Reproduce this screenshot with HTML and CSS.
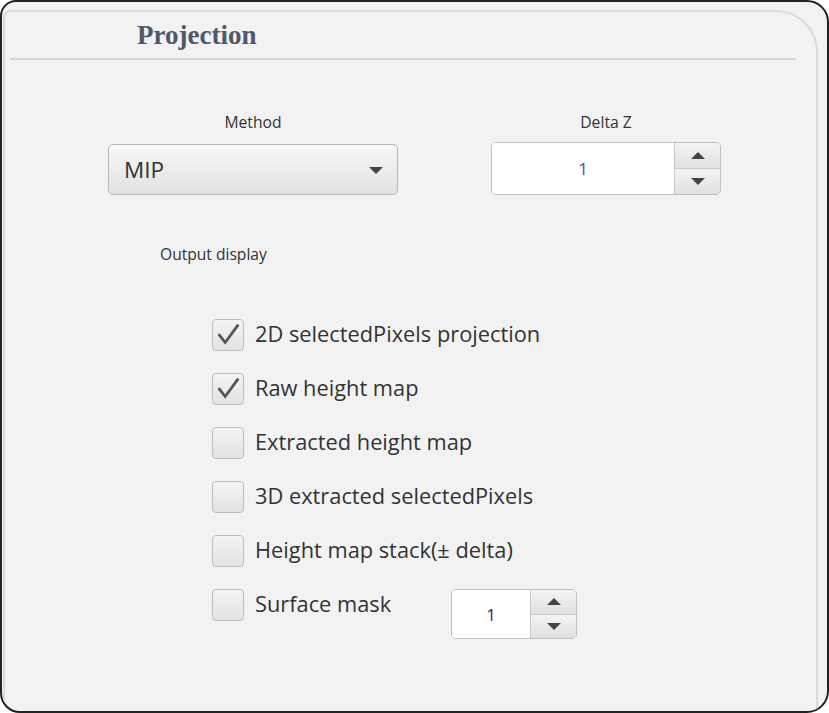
FILE: index.html
```html
<!DOCTYPE html>
<html>
<head>
<meta charset="utf-8">
<link rel="stylesheet" href="styles.css">
</head>
<body>
<div class="frame">
  <div class="panel">
    <div class="heading">Projection</div>
    <div class="divider"></div>
    <div class="controls">
      <div class="col col-method">
        <div class="label">Method</div>
        <div class="combo">
          <span class="combo-text">MIP</span>
          <span class="combo-arrow"></span>
        </div>
      </div>
      <div class="col col-delta">
        <div class="label">Delta Z</div>
        <div class="spinner spinner-big">
          <div class="spin-field spin-blue">1</div>
          <div class="spin-btns">
            <div class="spin-btn"><span class="tri-up"></span></div>
            <div class="spin-btn"><span class="tri-down"></span></div>
          </div>
        </div>
      </div>
    </div>
    <div class="output-label">Output display</div>
    <div class="checks">
      <div class="check-row">
        <div class="box"><svg viewBox="0 0 32 32" width="32" height="32"><polyline points="6,15 13,24 27,5" fill="none" stroke="#555" stroke-width="3"/></svg></div>
        <span class="check-text">2D selectedPixels projection</span>
      </div>
      <div class="check-row">
        <div class="box"><svg viewBox="0 0 32 32" width="32" height="32"><polyline points="6,15 13,24 27,5" fill="none" stroke="#555" stroke-width="3"/></svg></div>
        <span class="check-text">Raw height map</span>
      </div>
      <div class="check-row">
        <div class="box"></div>
        <span class="check-text">Extracted height map</span>
      </div>
      <div class="check-row">
        <div class="box"></div>
        <span class="check-text">3D extracted selectedPixels</span>
      </div>
      <div class="check-row">
        <div class="box"></div>
        <span class="check-text">Height map stack(± delta)</span>
      </div>
      <div class="check-row">
        <div class="box"></div>
        <span class="check-text">Surface mask</span>
        <div class="spinner spinner-small">
          <div class="spin-field spin-dark">1</div>
          <div class="spin-btns">
            <div class="spin-btn"><span class="tri-up"></span></div>
            <div class="spin-btn"><span class="tri-down"></span></div>
          </div>
        </div>
      </div>
    </div>
  </div>
</div>
</body>
</html>
```
FILE: styles.css
```css
html, body {
  margin: 0;
  padding: 0;
  background: #ffffff;
}
.frame {
  box-sizing: border-box;
  width: 829px;
  height: 713px;
  border: 2px solid #222;
  border-radius: 16px 22px 22px 20px;
  background: #f2f2f2;
  overflow: hidden;
  padding: 8px 9px 0 1px;
}
.panel {
  box-sizing: border-box;
  height: 760px;
  border: 2px solid #dadada;
  border-radius: 8px 42px 0 0;
  padding: 0;
}
.heading {
  font-family: "Liberation Serif", serif;
  font-weight: bold;
  font-size: 27px;
  line-height: 30px;
  color: #4d5869;
  padding: 8px 0 0 132px;
  height: 38px;
}
.divider {
  height: 2px;
  background: #d6d6d6;
  margin: 0 20px 0 5px;
}
.controls {
  display: flex;
  align-items: flex-end;
  margin-top: 52px;
  padding-left: 103px;
  font-family: "Open Sans", sans-serif;
}
.col {
  display: flex;
  flex-direction: column;
  align-items: center;
}
.col-method {
  width: 290px;
}
.col-delta {
  width: 230px;
  margin-left: 93px;
}
.label {
  font-size: 15.7px;
  line-height: 20px;
  color: #333;
}
.col-method .label {
  margin-bottom: 12px;
}
.col-delta .label {
  margin-bottom: 10px;
}
.combo {
  box-sizing: border-box;
  width: 290px;
  height: 51px;
  border: 1px solid #b8b8b8;
  border-radius: 5px;
  background: linear-gradient(#f7f7f7, #e2e2e2);
  display: flex;
  align-items: center;
  justify-content: space-between;
  padding: 0 14px 0 15px;
}
.combo-text {
  font-size: 22.5px;
  color: #333;
}
.combo-arrow {
  width: 0;
  height: 0;
  border-left: 7px solid transparent;
  border-right: 7px solid transparent;
  border-top: 7px solid #444;
  margin-top: 2px;
}
.spinner {
  box-sizing: border-box;
  display: flex;
  border: 1px solid #c0c0c0;
  border-radius: 5px;
  overflow: hidden;
  background: #fff;
}
.spinner-big {
  width: 230px;
  height: 53px;
}
.spinner-small {
  width: 126px;
  height: 50px;
  margin-left: 60px;
  align-self: flex-start;
}
.spin-field {
  flex: 1;
  display: flex;
  align-items: center;
  justify-content: center;
  font-size: 17px;
  background: #fff;
}
.spin-blue { color: #2a5c9a; }
.spin-dark { color: #3a2448; }
.spin-btns {
  width: 45px;
  display: flex;
  flex-direction: column;
  border-left: 1px solid #c8c8c8;
}
.spin-btn {
  flex: 1;
  display: flex;
  align-items: center;
  justify-content: center;
  background: linear-gradient(#f4f4f4, #e0e0e0);
}
.spin-btn + .spin-btn {
  border-top: 1px solid #c8c8c8;
}
.tri-up {
  width: 0; height: 0;
  border-left: 7px solid transparent;
  border-right: 7px solid transparent;
  border-bottom: 7px solid #444;
}
.tri-down {
  width: 0; height: 0;
  border-left: 7px solid transparent;
  border-right: 7px solid transparent;
  border-top: 7px solid #444;
}
.output-label {
  font-family: "Open Sans", sans-serif;
  font-size: 15.6px;
  line-height: 20px;
  color: #333;
  margin-top: 49px;
  padding-left: 155px;
}
.checks {
  display: flex;
  flex-direction: column;
  gap: 22px;
  margin-top: 55px;
  padding-left: 207px;
  font-family: "Open Sans", sans-serif;
}
.check-row {
  display: flex;
  align-items: flex-start;
  height: 32px;
}
.box {
  box-sizing: border-box;
  width: 32px;
  height: 32px;
  border: 1px solid #bdbdbd;
  border-radius: 4px;
  background: linear-gradient(#f4f4f4, #e2e2e2);
  display: flex;
  align-items: center;
  justify-content: center;
}
.check-text {
  font-size: 21.8px;
  line-height: 30px;
  color: #333;
  margin-left: 11px;
}
```
